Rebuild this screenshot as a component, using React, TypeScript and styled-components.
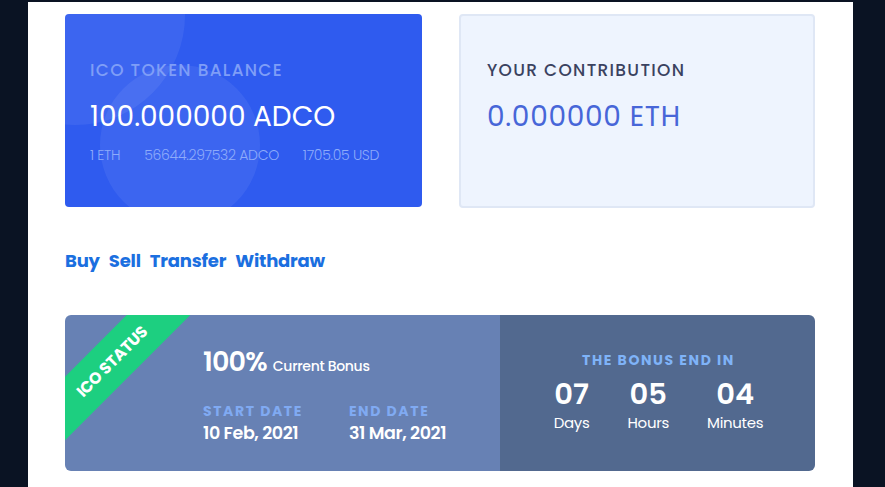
import React from 'react'
import styled, { createGlobalStyle } from 'styled-components'

const GlobalStyle = createGlobalStyle`
  html, body {
    margin: 0;
    padding: 0;
    background: #0a1323;
    font-family: Poppins, Inter, "Noto Sans", sans-serif;
  }
  * { box-sizing: border-box; }
`

const countdown = [
  { value: '07', label: 'Days' },
  { value: '05', label: 'Hours' },
  { value: '04', label: 'Minutes' },
]

const actions = ['Buy', 'Sell', 'Transfer', 'Withdraw']

export default function App() {
  return (
    <>
      <GlobalStyle />
      <Page>
        <Panel>
          <CardRow>
            <BalanceCard>
              <Bubble size={220} left={-100} top={-109} />
              <Bubble size={160} left={35} top={51} />
              <CardContent>
                <CardTitle light>ICO Token Balance</CardTitle>
                <BigAmount>100.000000 ADCO</BigAmount>
                <Rates>
                  <span>1 ETH</span>
                  <span>56644.297532 ADCO</span>
                  <span>1705.05 USD</span>
                </Rates>
              </CardContent>
            </BalanceCard>

            <ContributionCard>
              <CardContent inset>
                <CardTitle>Your Contribution</CardTitle>
                <ContributionAmount>0.000000 ETH</ContributionAmount>
              </CardContent>
            </ContributionCard>
          </CardRow>

          <Actions>
            {actions.map(a => (
              <ActionLink key={a} href="#">{a}</ActionLink>
            ))}
          </Actions>

          <StatusCard>
            <StatusMain>
              <Ribbon>ICO Status</Ribbon>
              <StatusInfo>
                <BonusLine>
                  <BonusValue>100%</BonusValue>
                  <BonusText>Current Bonus</BonusText>
                </BonusLine>
                <DateRow>
                  <DateBlock>
                    <DateLabel>Start Date</DateLabel>
                    <DateValue>10 Feb, 2021</DateValue>
                  </DateBlock>
                  <DateBlock>
                    <DateLabel>End Date</DateLabel>
                    <DateValue>31 Mar, 2021</DateValue>
                  </DateBlock>
                </DateRow>
              </StatusInfo>
            </StatusMain>

            <Countdown>
              <CountdownTitle>The Bonus End In</CountdownTitle>
              <CountdownRow>
                {countdown.map(c => (
                  <CountItem key={c.label}>
                    <CountValue>{c.value}</CountValue>
                    <CountLabel>{c.label}</CountLabel>
                  </CountItem>
                ))}
              </CountdownRow>
            </Countdown>
          </StatusCard>
        </Panel>
      </Page>
    </>
  )
}

const Page = styled.div`
  padding: 2px 32px 0 28px;
  min-height: 487px;
`

const Panel = styled.div`
  background: #ffffff;
  width: 825px;
  min-height: 485px;
  padding: 12px 38px 0 37px;
`

const CardRow = styled.div`
  display: grid;
  grid-template-columns: 357px 356px;
  column-gap: 37px;
`

const BalanceCard = styled.div`
  position: relative;
  height: 193px;
  border-radius: 4px;
  background: #2f5bef;
  overflow: hidden;
`

const Bubble = styled.div<{ size: number; left: number; top: number }>`
  position: absolute;
  width: ${p => p.size}px;
  height: ${p => p.size}px;
  left: ${p => p.left}px;
  top: ${p => p.top}px;
  border-radius: 50%;
  background: rgba(255, 255, 255, 0.065);
`

const ContributionCard = styled.div`
  height: 194px;
  border-radius: 4px;
  background: #eef4fe;
  border: 2px solid #dfe7f5;
`

const CardContent = styled.div<{ inset?: boolean }>`
  position: relative;
  padding: ${p => (p.inset ? '43px 0 0 26px' : '45px 0 0 25px')};
`

const CardTitle = styled.div<{ light?: boolean }>`
  font-size: 17px;
  font-weight: 500;
  letter-spacing: 1.3px;
  text-transform: uppercase;
  line-height: 22px;
  color: ${p => (p.light ? '#7f9ef7' : '#3a4260')};
`

const BigAmount = styled.div`
  margin-top: 18px;
  font-size: 28px;
  font-weight: 400;
  line-height: 36px;
  color: #ffffff;
`

const Rates = styled.div`
  display: flex;
  gap: 24px;
  margin-top: 10px;
  font-size: 14px;
  line-height: 20px;
  font-weight: 300;
  letter-spacing: -0.3px;
  color: #8eabfa;
`

const ContributionAmount = styled(BigAmount)`
  color: #4766d8;
  letter-spacing: 0.7px;
`

const Actions = styled.div`
  display: flex;
  gap: 9px;
  margin-top: 41px;
  line-height: 24px;
`

const ActionLink = styled.a`
  font-size: 18px;
  font-weight: 700;
  color: #1b6fe0;
  text-decoration: none;
  letter-spacing: -0.2px;
`

const StatusCard = styled.div`
  display: grid;
  grid-template-columns: 435px 315px;
  height: 156px;
  margin-top: 42px;
  border-radius: 6px;
  overflow: hidden;
`

const StatusMain = styled.div`
  position: relative;
  background: #6781b4;
  padding: 29px 0 0 138px;
  overflow: hidden;
`

const Ribbon = styled.div`
  position: absolute;
  width: 230px;
  height: 45px;
  left: -68px;
  top: 24px;
  transform: rotate(-45deg);
  background: #1dcf80;
  color: #ffffff;
  font-size: 16px;
  font-weight: 700;
  text-transform: uppercase;
  display: flex;
  align-items: center;
  justify-content: center;
  letter-spacing: -0.2px;
`

const StatusInfo = styled.div`
  display: flex;
  flex-direction: column;
`

const BonusLine = styled.div`
  display: flex;
  align-items: baseline;
  gap: 6px;
  color: #ffffff;
  line-height: 36px;
`

const BonusValue = styled.span`
  font-size: 27px;
  font-weight: 600;
  letter-spacing: -0.8px;
`

const BonusText = styled.span`
  font-size: 14px;
  font-weight: 500;
  letter-spacing: -0.3px;
`

const DateRow = styled.div`
  display: flex;
  gap: 46px;
  margin-top: 18px;
`

const DateBlock = styled.div`
  display: flex;
  flex-direction: column;
  gap: 1px;
`

const DateLabel = styled.span`
  font-size: 14px;
  font-weight: 700;
  letter-spacing: 1.6px;
  text-transform: uppercase;
  color: #80aaf2;
  line-height: 18px;
`

const DateValue = styled.span`
  font-size: 17.5px;
  font-weight: 600;
  color: #ffffff;
  letter-spacing: -0.4px;
  line-height: 24px;
`

const Countdown = styled.div`
  background: #52698f;
  display: flex;
  flex-direction: column;
  align-items: center;
  padding: 36px 0 0 2px;
`

const CountdownTitle = styled.div`
  font-size: 14px;
  font-weight: 700;
  letter-spacing: 1.6px;
  text-transform: uppercase;
  color: #7fb3f8;
  line-height: 18px;
`

const CountdownRow = styled.div`
  display: flex;
  gap: 38px;
  margin-top: 8px;
`

const CountItem = styled.div`
  display: flex;
  flex-direction: column;
  align-items: center;
  color: #ffffff;
`

const CountValue = styled.span`
  font-size: 29px;
  font-weight: 600;
  line-height: 34px;
  margin-bottom: 2px;
`

const CountLabel = styled.span`
  font-size: 15px;
  font-weight: 400;
  line-height: 20px;
  letter-spacing: -0.3px;
`
